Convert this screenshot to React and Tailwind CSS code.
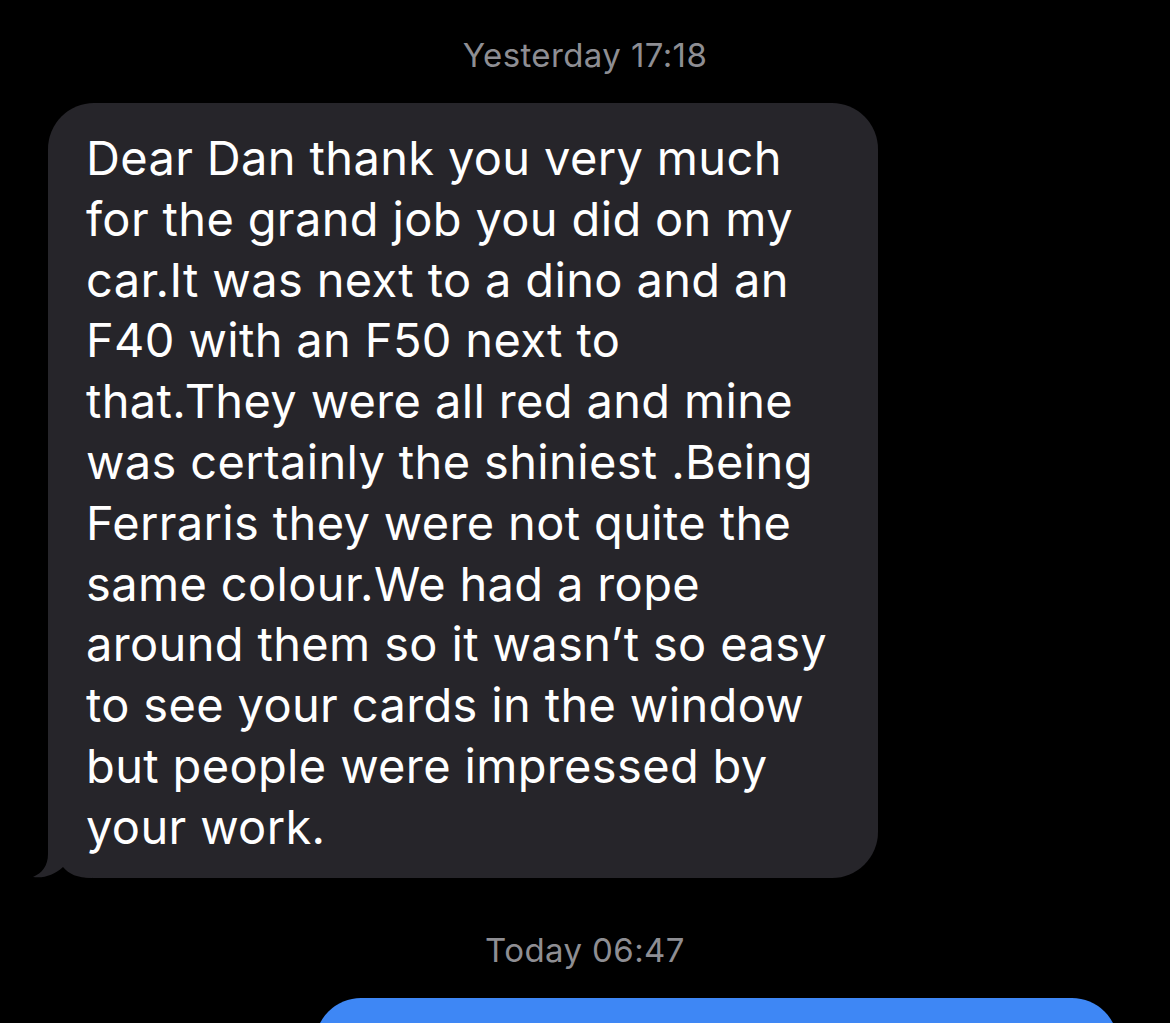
import React from 'react';

const lines = [
    'Dear Dan thank you very much',
    'for the grand job you did on my',
    'car.It was next to a dino and an',
    'F40 with an F50 next to',
    'that.They were all red and mine',
    'was certainly the shiniest .Being',
    'Ferraris they were not quite the',
    'same colour.We had a rope',
    'around them so it wasn\u2019t so easy',
    'to see your cards in the window',
    'but people were impressed by',
    'your work.',
];

const Timestamp = ({ children, className }) => (
    <div className={`w-full text-center text-[33px] leading-[36px] tracking-[0.4px] text-[#8e8e93] ${className}`}>
        {children}
    </div>
);

export default function App() {
    return (
        <div
            className="w-[1170px] h-[1023px] bg-black overflow-hidden flex flex-col"
            style={{ fontFamily: 'Inter, "Noto Sans", sans-serif' }}
        >
            <Timestamp className="mt-[37px]">Yesterday 17:18</Timestamp>

            {/* incoming bubble */}
            <div className="pl-[48px] mt-[30px]">
                <div className="relative w-[830px] bg-[#26252a] rounded-[46px] pl-[38px] pt-[25px] pb-[20px]">
                    <svg className="absolute left-[-16px] bottom-0" width="60" height="60" viewBox="0 0 60 60">
                        <path
                            d="M16 0 L16 36 C16 48 10 55 1 59 C12 60.5 22 57 31 49 C37 56 45 60 60 60 L60 0 Z"
                            fill="#26252a"
                        />
                    </svg>
                    {lines.map((l, i) => (
                        <div key={i} className="relative text-white text-[47px] leading-[60.8px] tracking-[0.35px] whitespace-nowrap">
                            {l}
                        </div>
                    ))}
                </div>
            </div>

            <Timestamp className="mt-[54px]">Today 06:47</Timestamp>

            {/* outgoing bubble, cut off */}
            <div className="flex justify-end pr-[52px] mt-[30px]">
                <div className="w-[803px] h-[120px] bg-[#3e87f5] rounded-[46px]" />
            </div>
        </div>
    );
}
